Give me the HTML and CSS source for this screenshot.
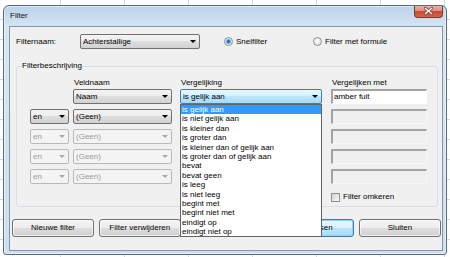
FILE: index.html
```html
<!DOCTYPE html>
<html lang="nl">
<head>
  <meta charset="UTF-8">
  <title>Filter</title>
  <link rel="stylesheet" href="styles.css">
</head>
<body>
  <div class="window">
    <!-- Title bar -->
    <div class="titlebar">
      <span class="title">Filter</span>
      <span class="close-btn">
        <svg width="29" height="12" viewBox="0 0 29 12">
          <path d="M11 3 L18 9 M18 3 L11 9" stroke="#6b2a1e" stroke-width="3" stroke-linecap="round"/>
          <path d="M11 3 L18 9 M18 3 L11 9" stroke="#fff" stroke-width="1.6" stroke-linecap="round"/>
        </svg>
      </span>
    </div>

    <!-- Dialog content -->
    <div class="client">
      <div class="name-row">
        <span class="name-label">Filternaam:</span>
        <div class="combo name-combo"><span>Achterstallige</span></div>
        <div class="radio-opt opt-quick"><span class="radio checked"></span>Snelfilter</div>
        <div class="radio-opt"><span class="radio"></span>Filter met formule</div>
      </div>

      <fieldset class="group">
        <legend>Filterbeschrijving</legend>
        <div class="crit-row crit-head">
          <span></span>
          <span class="col-head">Veldnaam</span>
          <span class="col-head">Vergelijking</span>
          <span class="col-head">Vergelijken met</span>
        </div>
        <div class="crit-row">
          <span></span>
          <div class="combo field"><span>Naam</span></div>
          <div class="combo compare active"><span>is gelijk aan</span></div>
          <div class="textbox">amber fuit</div>
        </div>
        <div class="crit-row">
          <div class="combo conj"><span>en</span></div>
          <div class="combo field"><span>(Geen)</span></div>
          <div class="combo compare"><span></span></div>
          <div class="textbox off"></div>
        </div>
        <div class="crit-row">
          <div class="combo conj off"><span>en</span></div>
          <div class="combo field off"><span>(Geen)</span></div>
          <div class="combo compare off"><span></span></div>
          <div class="textbox off"></div>
        </div>
        <div class="crit-row">
          <div class="combo conj off"><span>en</span></div>
          <div class="combo field off"><span>(Geen)</span></div>
          <div class="combo compare off"><span></span></div>
          <div class="textbox off"></div>
        </div>
        <div class="crit-row">
          <div class="combo conj off"><span>en</span></div>
          <div class="combo field off"><span>(Geen)</span></div>
          <div class="combo compare off"><span></span></div>
          <div class="textbox off"></div>
        </div>
        <div class="crit-row check-row">
          <span></span><span></span><span></span>
          <div class="check-opt"><span class="checkbox"></span>Filter omkeren</div>
        </div>
      </fieldset>

      <div class="buttons">
        <button>Nieuwe filter</button>
        <button>Filter verwijderen</button>
        <button></button>
        <button class="default">Toepassen</button>
        <button>Sluiten</button>
      </div>

      <!-- Open list of the Vergelijking combo -->
      <ul class="dropdown">
        <li class="sel">is gelijk aan</li>
        <li>is niet gelijk aan</li>
        <li>is kleiner dan</li>
        <li>is groter dan</li>
        <li>is kleiner dan of gelijk aan</li>
        <li>is groter dan of gelijk aan</li>
        <li>bevat</li>
        <li>bevat geen</li>
        <li>is leeg</li>
        <li>is niet leeg</li>
        <li>begint met</li>
        <li>begint niet met</li>
        <li>eindigt op</li>
        <li>eindigt niet op</li>
      </ul>
    </div>
  </div>
</body>
</html>
```

FILE: styles.css
```css
/* Page behind the dialog: spreadsheet grid */
body {
  margin: 0;
  width: 450px;
  height: 257px;
  overflow: hidden;
  background-color: #fff;
  background-image:
    linear-gradient(to right, #d0d7e5 1px, transparent 1px),
    linear-gradient(to bottom, #d0d7e5 1px, transparent 1px);
  background-size: 64px 20px;
  background-position: 60px 0, 0 -1px;
  font-family: "Liberation Sans", Arial, sans-serif;
  font-size: 8px;
  line-height: 10px;
  color: #000;
}

/* Window frame */
.window {
  margin: 5px 0 0 3px;
  width: 444px;
  height: 250px;
  box-sizing: border-box;
  border: 1px solid #5a6a7d;
  border-radius: 6px 6px 3px 3px;
  padding: 0 3px 3px 5px;
  background: linear-gradient(#bcd3ea, #d6e6f4 22px, #cddff0);
  box-shadow: inset 0 0 0 1px rgba(255, 255, 255, 0.5);
}

.titlebar {
  display: flex;
  height: 20px;
}

.title {
  flex: 1;
  padding: 5px 0 0 1px;
  color: #111;
}

.close-btn {
  width: 29px;
  height: 12px;
  box-sizing: border-box;
  border: 1px solid #7a3a2c;
  border-top: none;
  border-radius: 0 0 4px 4px;
  background: linear-gradient(#eab1a3, #dc8e7c 45%, #c64a32 50%, #d8664b);
  display: flex;
  align-items: center;
  justify-content: center;
}

.close-btn svg {
  display: block;
  margin-top: -1px;
}

/* Client area */
.client {
  position: relative;
  height: 225px;
  box-sizing: border-box;
  border: 1px solid #8496ab;
  background: #f0f0f0;
}

.name-row {
  display: flex;
  align-items: center;
  height: 15px;
  padding: 7px 0 0 6px;
}

.name-label {
  width: 64px;
}

.name-combo {
  width: 120px;
}

.radio-opt {
  display: flex;
  align-items: center;
  gap: 3px;
}

.opt-quick {
  margin-left: 24px;
  width: 89px;
}

.radio {
  width: 9px;
  height: 9px;
  box-sizing: border-box;
  border: 1px solid #8e8f8f;
  border-radius: 50%;
  background: radial-gradient(circle at 40% 40%, #fdfdfd, #d6d6d6);
}

.radio.checked {
  background: radial-gradient(circle, #1f5fa8 0, #3b87d0 1.6px, #c7e0f4 2.6px, #ededed 3.5px);
}

/* Combo boxes */
.combo {
  display: flex;
  align-items: center;
  height: 15px;
  box-sizing: border-box;
  border: 1px solid #707070;
  border-radius: 2px;
  padding: 0 3px 0 2px;
  background: linear-gradient(#f4f4f4, #ececec 50%, #dedede 50%, #d2d2d2);
}

.combo span {
  flex: 1;
  white-space: nowrap;
  overflow: hidden;
}

.combo::after {
  content: "";
  border-left: 3px solid transparent;
  border-right: 3px solid transparent;
  border-top: 3px solid #000;
}

.combo.active {
  border-color: #3c7fb1;
  background: linear-gradient(#eaf6fd, #d9f0fc 50%, #bee6fd 50%, #a7d9f5);
}

.combo.off {
  border-color: #b5b9bc;
  background: #f4f4f4;
  color: #9a9a9a;
}

.combo.off::after {
  border-top-color: #a8a8a8;
}

.conj { width: 39px; }
.field { width: 99px; }
.compare { width: 142px; }

/* Filter description group */
.group {
  margin: 12px 0 0 6px;
  padding: 7px 0 4px 4px;
  width: 422px;
  min-width: 0;
  box-sizing: border-box;
  border: 1px solid #d5dfe5;
  border-radius: 3px;
}

.group legend {
  padding: 0 1px;
}

.crit-row {
  display: grid;
  grid-template-columns: 43px 107px 151px 96px;
  justify-items: start;
  height: 15px;
  margin: 0 0 5px 9px;
}

.crit-row.crit-head {
  height: 11px;
  margin-bottom: 0;
}

.col-head {
  padding-left: 1px;
}

.textbox {
  width: 96px;
  height: 15px;
  box-sizing: border-box;
  border-top: 2px solid #a3a3a3;
  border-left: 2px solid #a3a3a3;
  border-right: 1px solid #fff;
  border-bottom: 1px solid #fff;
  background: #fff;
  padding-left: 1px;
  line-height: 11px;
}

.textbox.off {
  background: #f0f0f0;
  border-right-color: #f7f7f7;
  border-bottom-color: #f7f7f7;
}

.check-row {
  height: 10px;
  margin: 8px 0 0 9px;
}

.check-opt {
  display: flex;
  align-items: center;
  gap: 3px;
}

.checkbox {
  width: 9px;
  height: 9px;
  box-sizing: border-box;
  border: 1px solid #8f8f8f;
  background: linear-gradient(135deg, #d4d4d4, #f9f9f9);
}

/* Bottom buttons */
.buttons {
  display: flex;
  justify-content: space-between;
  margin: 12px 1px 0 2px;
}

.buttons button {
  width: 82px;
  height: 18px;
  padding: 0;
  font: inherit;
  color: #000;
  border: 1px solid #707070;
  border-radius: 3px;
  background: linear-gradient(#f4f4f4, #ececec 50%, #dedede 50%, #d0d0d0);
  box-shadow: inset 0 0 0 1px rgba(255, 255, 255, 0.7);
}

.buttons button.default {
  border-color: #3c7fb1;
  background: linear-gradient(#eaf6fd, #d9f0fc 50%, #bee6fd 50%, #a7d9f5);
  box-shadow: inset 0 0 0 1px #8fd3f5;
}

/* Open drop-down list */
.dropdown {
  position: absolute;
  left: 170px;
  top: 77px;
  width: 142px;
  margin: 0;
  padding: 0;
  list-style: none;
  box-sizing: border-box;
  border: 1px solid #646464;
  background: #fff;
}

.dropdown li {
  height: 9.4px;
  line-height: 9.4px;
  padding-left: 1px;
  white-space: nowrap;
}

.dropdown li.sel {
  background: #3399ff;
  color: #fff;
}
```
